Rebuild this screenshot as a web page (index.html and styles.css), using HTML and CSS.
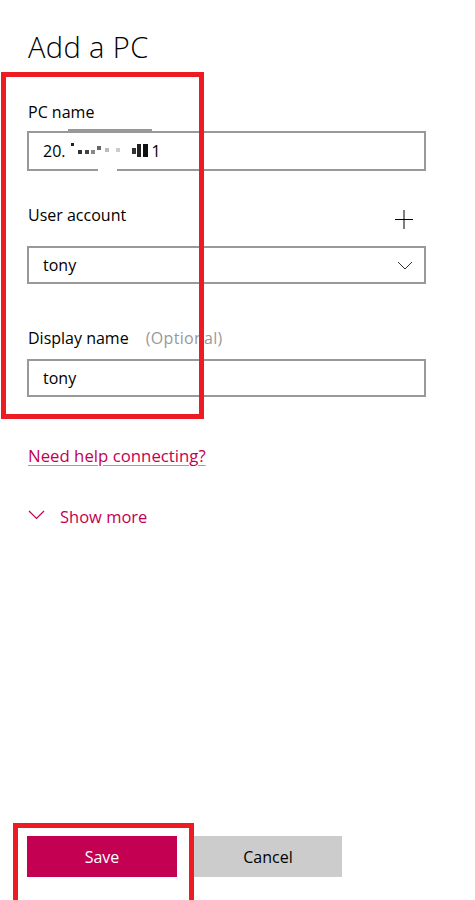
FILE: index.html
```html
<!DOCTYPE html>
<html lang="en">
<head>
<meta charset="utf-8">
<title>Add a PC</title>
<link rel="stylesheet" href="styles.css">
</head>
<body>
<main class="page">
  <h1 class="title">Add a PC</h1>

  <div class="field field-pc">
    <div class="label">PC name</div>
    <div class="input">
      <span class="val">20.<span class="mask"><i class="b b1"></i><i class="b b2"></i><i class="b b3"></i><i class="b b4"></i><i class="b b5"></i><i class="b b6"></i><i class="b b7"></i><i class="b b8"></i><i class="b b9"></i><i class="b b10"></i></span>1</span>
    </div>
    <span class="redact-line"></span>
    <span class="redact-gap"></span>
  </div>

  <div class="field field-user">
    <div class="label-row">
      <span class="label">User account</span>
      <svg class="plus" width="20" height="20" viewBox="0 0 20 20"><path d="M10 1V20M1 10.5H19" stroke="#000" stroke-width="1" fill="none"/></svg>
    </div>
    <div class="input select">
      <span class="val">tony</span>
      <svg class="chev" width="16" height="9" viewBox="0 0 16 9"><path d="M1 1L8 8L15 1" stroke="#333" stroke-width="1" fill="none"/></svg>
    </div>
  </div>

  <div class="field field-display">
    <div class="label">Display name <span class="optional">(Optional)</span></div>
    <div class="input"><span class="val">tony</span></div>
  </div>

  <a class="help" href="#">Need help connecting?</a>

  <div class="show-more">
    <svg class="chev-more" width="17" height="10" viewBox="0 0 17 10"><path d="M1 1L8.5 8.5L16 1" stroke="#c30052" stroke-width="1.2" fill="none"/></svg>
    <span>Show more</span>
  </div>

  <div class="actions">
    <button class="btn btn-save">Save</button>
    <button class="btn btn-cancel">Cancel</button>
  </div>

  <div class="annot annot-fields"></div>
  <div class="annot annot-save"></div>
</main>
</body>
</html>
```

FILE: styles.css
```css
* { box-sizing: border-box; }
html, body { margin: 0; padding: 0; background: #fff; }
body {
  font-family: "Open Sans", "Noto Sans", sans-serif;
  color: #000;
  width: 475px;
  height: 900px;
  overflow: hidden;
}
.page {
  position: relative;
  height: 900px;
  padding: 29px 0 0 27px;
  display: flex;
  flex-direction: column;
}
.title {
  margin: 0 0 0 1px;
  font-size: 29px;
  font-weight: 300;
  line-height: 36px;
  letter-spacing: 0.4px;
}
.label {
  font-size: 16px;
  line-height: 22px;
  margin-left: 1px;
}
.field { position: relative; width: 399px; }
.field-pc { margin-top: 36px; }
.field-pc .label { margin-bottom: 8px; }
.input {
  height: 40px;
  border: 2px solid #999;
  display: flex;
  align-items: center;
  padding-left: 14px;
  font-size: 16px;
}
.val { line-height: 22px; }
.mask { display: inline-block; width: 86px; height: 22px; position: relative; vertical-align: top; }
.b { position: absolute; display: block; }
.b1 { left: 5px; top: 3px; width: 3px; height: 3px; background: #222; }
.b2 { left: 12px; top: 10px; width: 4px; height: 4px; background: #333; }
.b3 { left: 19px; top: 10px; width: 4px; height: 4px; background: #444; }
.b4 { left: 25px; top: 10px; width: 4px; height: 4px; background: #888; }
.b5 { left: 31px; top: 6px; width: 4px; height: 4px; background: #666; }
.b6 { left: 39px; top: 8px; width: 4px; height: 4px; background: #bbb; }
.b7 { left: 50px; top: 8px; width: 4px; height: 4px; background: #ccc; }
.b8 { left: 66px; top: 8px; width: 4px; height: 6px; background: #333; }
.b9 { left: 71px; top: 4px; width: 4px; height: 13px; background: #222; }
.b10 { left: 77px; top: 4px; width: 5px; height: 13px; background: #111; }
.redact-line {
  position: absolute;
  left: 41px; top: 28px;
  width: 84px; height: 2px;
  background: #999;
}
.redact-gap {
  position: absolute;
  left: 71px; bottom: 0;
  width: 19px; height: 2px;
  background: #fff;
}
.field-user { margin-top: 33px; }
.label-row {
  display: flex;
  justify-content: space-between;
  align-items: flex-start;
  height: 42px;
}
.plus { margin-top: 5px; margin-right: 12px; }
.select { height: 38px; justify-content: space-between; padding-right: 11px; }
.chev { margin-top: 1px; }
.field-display { margin-top: 43px; }
.field-display .label { margin-bottom: 10px; }
.field-display .input { height: 38px; }
.optional { color: #999; margin-left: 13px; letter-spacing: 0.3px; }
.help {
  margin-top: 48px;
  margin-left: 1px;
  align-self: flex-start;
  color: #c30052;
  font-size: 16.8px;
  line-height: 22px;
  text-decoration: underline;
  text-decoration-color: #e07fa5;
  text-underline-offset: 3px;
}
.show-more {
  margin-top: 39px;
  margin-left: 1px;
  display: flex;
  align-items: center;
  gap: 15px;
  color: #c30052;
  font-size: 16.5px;
  line-height: 22px;
}
.chev-more { margin-top: -4px; }
.actions {
  margin-top: auto;
  margin-bottom: 23px;
  display: flex;
  gap: 17px;
}
.btn {
  border: none;
  height: 41px;
  font-family: inherit;
  font-size: 16px;
  padding: 0;
}
.btn-save { width: 150px; background: #c30052; color: #fff; }
.btn-cancel { width: 148px; background: #ccc; color: #000; }
.annot {
  position: absolute;
  border: 5px solid #ed1c24;
  pointer-events: none;
}
.annot-fields { left: 1px; top: 72px; width: 203px; height: 347px; }
.annot-save { left: 13px; top: 823px; width: 181px; height: 82px; }
```
